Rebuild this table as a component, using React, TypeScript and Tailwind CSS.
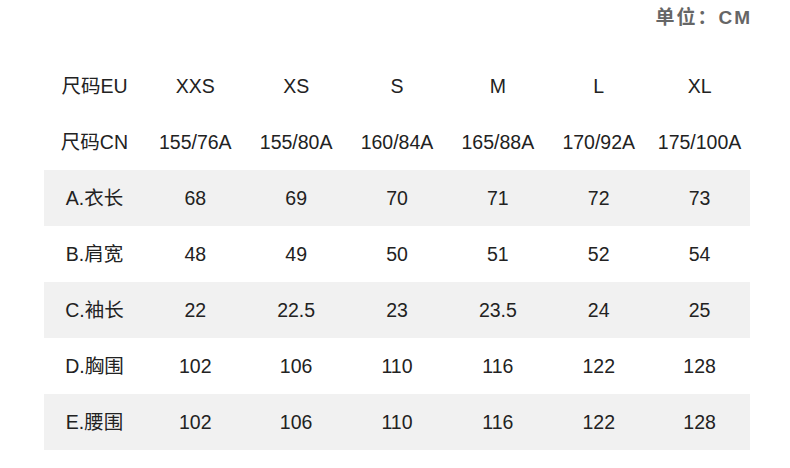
const sizes = ["XXS", "XS", "S", "M", "L", "XL"];

const rows: { label: string; values: string[]; shaded?: boolean }[] = [
  { label: "尺码CN", values: ["155/76A", "155/80A", "160/84A", "165/88A", "170/92A", "175/100A"] },
  { label: "A.衣长", values: ["68", "69", "70", "71", "72", "73"], shaded: true },
  { label: "B.肩宽", values: ["48", "49", "50", "51", "52", "54"] },
  { label: "C.袖长", values: ["22", "22.5", "23", "23.5", "24", "25"], shaded: true },
  { label: "D.胸围", values: ["102", "106", "110", "116", "122", "128"] },
  { label: "E.腰围", values: ["102", "106", "110", "116", "122", "128"], shaded: true },
];

function Row({ label, values, shaded }: { label: string; values: string[]; shaded?: boolean }) {
  return (
    <div
      className={`grid grid-cols-7 h-[56px] items-center text-center pt-px ${shaded ? "bg-[#f1f1f1]" : ""}`}
    >
      <span>{label}</span>
      {values.map((v, i) => (
        <span key={i}>{v}</span>
      ))}
    </div>
  );
}

export default function App() {
  return (
    <div
      className="w-[790px] h-[468px] bg-white pl-[44px] pr-[40px] text-[#222] text-[19.5px]"
      style={{ fontFamily: '"Liberation Sans", "Noto Sans CJK SC", sans-serif' }}
    >
      <div className="h-[37px] flex items-center justify-end text-[19px] font-bold text-[#666] tracking-[2px] -mr-[2px]">
        单位：CM
      </div>
      <div className="mt-[21px]">
        <Row label="尺码EU" values={sizes} />
        {rows.map((r) => (
          <Row key={r.label} {...r} />
        ))}
      </div>
    </div>
  );
}
